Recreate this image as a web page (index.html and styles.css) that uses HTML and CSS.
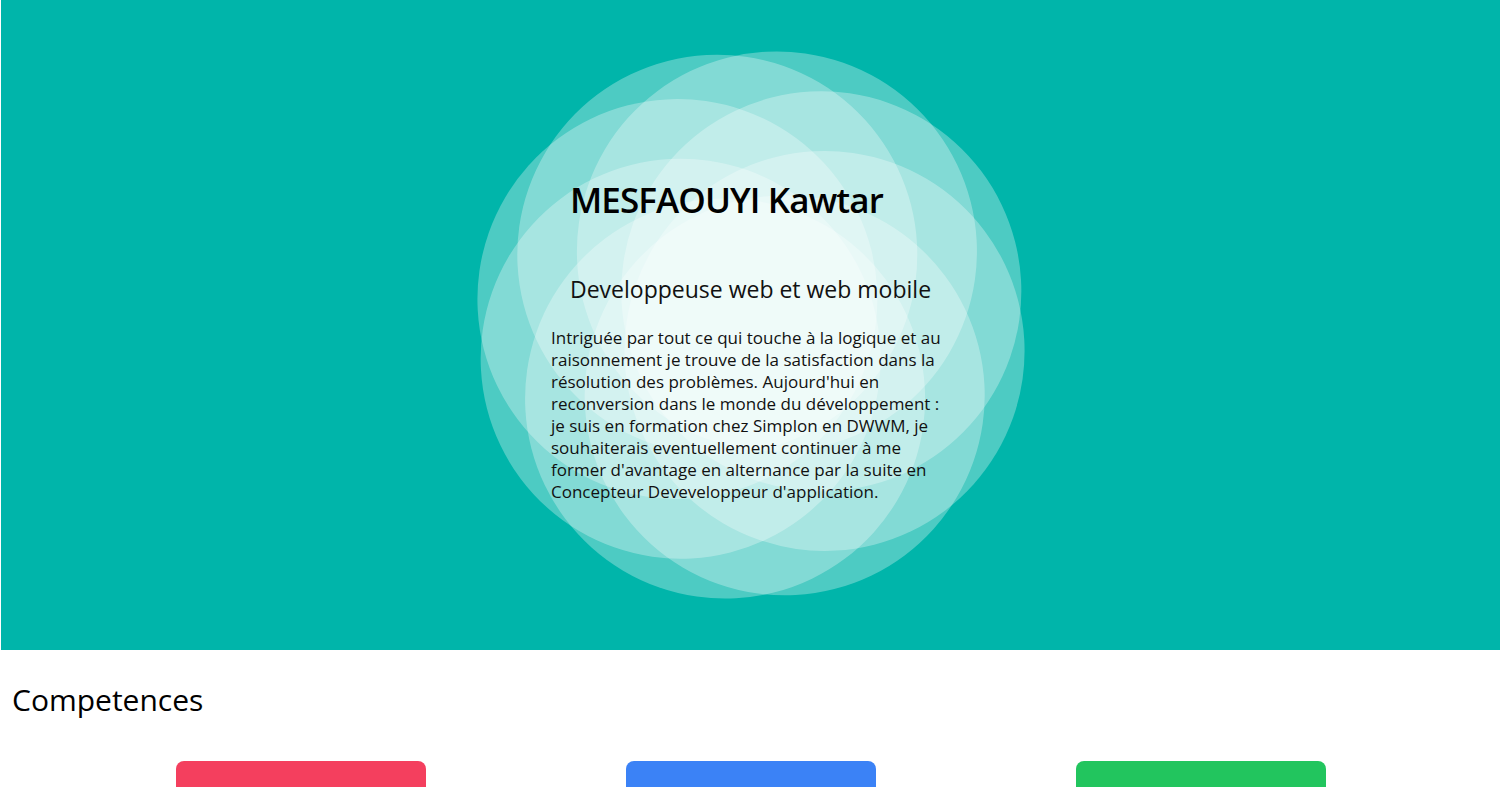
FILE: index.html
```html
<!DOCTYPE html>
<html lang="fr">
<head>
<meta charset="utf-8">
<title>MESFAOUYI Kawtar</title>
<link rel="stylesheet" href="styles.css">
</head>
<body>
<header class="hero">
  <div class="flower">
    <span class="circle c1"></span>
    <span class="circle c2"></span>
    <span class="circle c3"></span>
    <span class="circle c4"></span>
    <span class="circle c5"></span>
    <span class="circle c6"></span>
    <span class="circle c7"></span>
    <span class="circle c8"></span>
    <div class="intro">
      <h1 class="name">MESFAOUYI Kawtar</h1>
      <h2 class="role">Developpeuse web et web mobile</h2>
      <p class="bio">Intriguée par tout ce qui touche à la logique et au raisonnement je trouve de la satisfaction dans la résolution des problèmes. Aujourd'hui en reconversion dans le monde du développement : je suis en formation chez Simplon en DWWM, je souhaiterais eventuellement continuer à me former d'avantage en alternance par la suite en Concepteur Deveveloppeur d'application.</p>
    </div>
  </div>
</header>
<section class="skills">
  <h2 class="skills-title">Competences</h2>
  <div class="cards">
    <div class="card card-red"></div>
    <div class="card card-blue"></div>
    <div class="card card-green"></div>
  </div>
</section>
</body>
</html>
```
FILE: styles.css
```css
* { box-sizing: border-box; }
html, body { margin: 0; padding: 0; background: #fff; }
body {
  font-family: "Open Sans", "Liberation Sans", sans-serif;
  color: #000;
}
.hero {
  margin-left: 1px;
  width: 1499px;
  height: 650px;
  background: #00b5aa;
  overflow: hidden;
}
.flower {
  display: grid;
  place-items: center;
  height: 100%;
}
.flower > * { grid-area: 1 / 1; }
.circle {
  width: 400px;
  height: 400px;
  border-radius: 50%;
  background: rgba(255, 255, 255, 0.3);
}
.c1 { transform: rotate(-70.6deg) translateX(78px); }
.c2 { transform: rotate(-25.6deg) translateX(78px); }
.c3 { transform: rotate(19.4deg) translateX(78px); }
.c4 { transform: rotate(64.4deg) translateX(78px); }
.c5 { transform: rotate(109.4deg) translateX(78px); }
.c6 { transform: rotate(154.4deg) translateX(78px); }
.c7 { transform: rotate(199.4deg) translateX(78px); }
.c8 { transform: rotate(244.4deg) translateX(78px); }
.intro {
  position: relative;
  z-index: 1;
  width: 400px;
  margin-left: 1px;
  margin-top: 30px;
}
.name {
  margin: 0 0 52px 19px;
  font-size: 35px;
  font-weight: 600;
  line-height: 44px;
  letter-spacing: -0.9px;
}
.role {
  margin: 0 0 23px 19px;
  font-size: 23px;
  font-weight: 400;
  line-height: 30px;
  color: #111;
}
.bio {
  margin: 0;
  font-size: 17px;
  line-height: 22px;
  color: #111;
}
.skills-title {
  margin: 30px 0 41px 12px;
  font-size: 30px;
  font-weight: 400;
  line-height: 40px;
}
.cards {
  display: flex;
  justify-content: center;
  gap: 200px;
  margin-left: 1px;
  width: 1499px;
}
.card {
  width: 250px;
  height: 140px;
  border-radius: 8px;
}
.card-red { background: #f43f5e; }
.card-blue { background: #3b82f6; }
.card-green { background: #22c55e; }
```
